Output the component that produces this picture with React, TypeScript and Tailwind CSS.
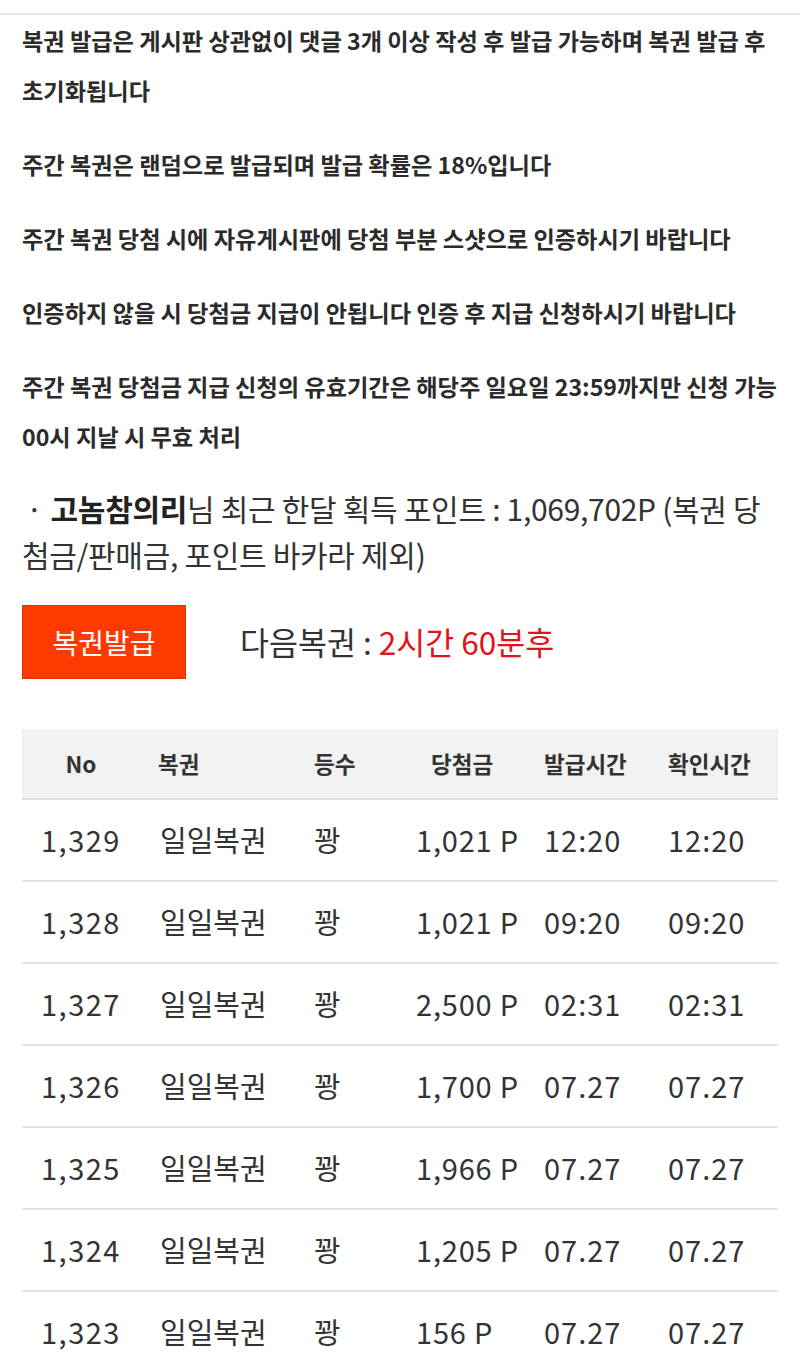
import React from 'react';

// each notice split where the original wraps
const NOTICES: string[][] = [
  ['복권 발급은 게시판 상관없이 댓글 3개 이상 작성 후 발급 가능하며 복권 발급 후', '초기화됩니다'],
  ['주간 복권은 랜덤으로 발급되며 발급 확률은 18%입니다'],
  ['주간 복권 당첨 시에 자유게시판에 당첨 부분 스샷으로 인증하시기 바랍니다'],
  ['인증하지 않을 시 당첨금 지급이 안됩니다 인증 후 지급 신청하시기 바랍니다'],
  ['주간 복권 당첨금 지급 신청의 유효기간은 해당주 일요일 23:59까지만 신청 가능', '00시 지날 시 무효 처리'],
];

const ROWS = [
  { no: '1,329', prize: '1,021 P', issued: '12:20', checked: '12:20' },
  { no: '1,328', prize: '1,021 P', issued: '09:20', checked: '09:20' },
  { no: '1,327', prize: '2,500 P', issued: '02:31', checked: '02:31' },
  { no: '1,326', prize: '1,700 P', issued: '07.27', checked: '07.27' },
  { no: '1,325', prize: '1,966 P', issued: '07.27', checked: '07.27' },
  { no: '1,324', prize: '1,205 P', issued: '07.27', checked: '07.27' },
  { no: '1,323', prize: '156 P', issued: '07.27', checked: '07.27' },
];

const COLS = 'grid grid-cols-[118px_157px_118px_127px_124px_112px]';

export default function App() {
  return (
    <div
      className="min-h-[1353px] bg-white text-[#333] overflow-hidden"
      style={{ fontFamily: '"Noto Sans CJK KR", "Noto Sans", sans-serif' }}
    >
      <div className="pt-[13px]">
        <div className="h-[2px] bg-[#e6e9ed]" />
      </div>

      <div className="px-[22px] flex flex-col gap-[24px]">
        {NOTICES.map((lines) => (
          <p key={lines[0]} className="text-[23.2px] font-bold leading-[50px] text-[#2b2b2b] whitespace-nowrap">
            {lines.map((l, i) => (
              <React.Fragment key={l}>
                {i > 0 && <br />}
                {l}
              </React.Fragment>
            ))}
          </p>
        ))}
      </div>

      <p className="px-[22px] mt-[24px] text-[30px] leading-[46px] text-[#333] whitespace-nowrap tracking-[-0.3px]">
        <span className="ml-[4px] mr-[8px]">·</span>
        <b className="font-bold text-[#222]">고놈참의리</b>님 최근 한달 획득 포인트 : 1,069,702P (복권 당
        <br />
        첨금/판매금, 포인트 바카라 제외)
      </p>

      <div className="px-[22px] mt-[28px] flex items-center gap-[54px]">
        <button className="w-[164px] h-[74px] bg-[#ff3a00] border border-[#e33500] text-white text-[28px]">
          복권발급
        </button>
        <div className="text-[31.5px] text-[#333]">
          다음복권 : <span className="text-[#e0141b]">2시간 60분후</span>
        </div>
      </div>

      <div className="mx-[22px] mt-[50px]">
        <div className={`${COLS} h-[71px] items-center bg-[#f2f2f2] border-b-2 border-[#dedede] text-[22.5px] font-bold text-[#333]`}>
          <div className="text-center">No</div>
          <div className="pl-[18px]">복권</div>
          <div className="pl-[17px]">등수</div>
          <div className="pl-[16px]">당첨금</div>
          <div className="pl-[2px]">발급시간</div>
          <div className="pl-[2px]">확인시간</div>
        </div>
        {ROWS.map((r) => (
          <div
            key={r.no}
            className={`${COLS} h-[82px] items-center border-b-2 border-[#e2e2e2] text-[29px] text-[#333]`}
          >
            <div className="text-center tracking-[1.5px]">{r.no}</div>
            <div className="pl-[20px]">일일복권</div>
            <div className="pl-[17px]">꽝</div>
            <div className="pl-[1px] tracking-[0.8px]">{r.prize}</div>
            <div className="pl-[2px] tracking-[1px]">{r.issued}</div>
            <div className="pl-[2px] tracking-[1px]">{r.checked}</div>
          </div>
        ))}
      </div>
    </div>
  );
}
